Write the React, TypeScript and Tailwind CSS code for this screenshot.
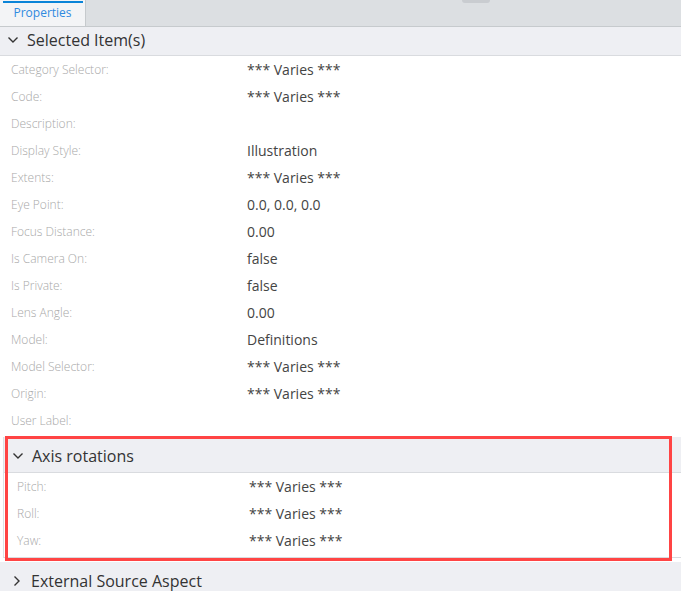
const font = { fontFamily: '"Open Sans", "Liberation Sans", sans-serif' };

const selected: [string, string][] = [
  ["Category Selector:", "*** Varies ***"],
  ["Code:", "*** Varies ***"],
  ["Description:", ""],
  ["Display Style:", "Illustration"],
  ["Extents:", "*** Varies ***"],
  ["Eye Point:", "0.0, 0.0, 0.0"],
  ["Focus Distance:", "0.00"],
  ["Is Camera On:", "false"],
  ["Is Private:", "false"],
  ["Lens Angle:", "0.00"],
  ["Model:", "Definitions"],
  ["Model Selector:", "*** Varies ***"],
  ["Origin:", "*** Varies ***"],
  ["User Label:", ""],
];

const rotations: [string, string][] = [
  ["Pitch:", "*** Varies ***"],
  ["Roll:", "*** Varies ***"],
  ["Yaw:", "*** Varies ***"],
];

function Chevron({ open }: { open: boolean }) {
  return (
    <svg width="12" height="12" viewBox="0 0 12 12" className="shrink-0">
      {open ? (
        <polyline points="1.5,3.5 6,8 10.5,3.5" fill="none" stroke="#333" strokeWidth="1.4" />
      ) : (
        <polyline points="3.5,1.5 8,6 3.5,10.5" fill="none" stroke="#333" strokeWidth="1.4" />
      )}
    </svg>
  );
}

function Row({ label, value, labelW }: { label: string; value: string; labelW: string }) {
  return (
    <div className="flex h-[27px] items-center">
      <div className={`${labelW} shrink-0 text-[12px] font-light text-[#a8a8a8]`}>{label}</div>
      <div className="text-[14px] text-[#444]">{value}</div>
    </div>
  );
}

export default function App() {
  return (
    <div className="w-[681px] h-[591px] overflow-hidden bg-white" style={font}>
      {/* Tab bar */}
      <div className="relative flex h-[27px] bg-[#dcdfe2] border-b border-[#c6cacd]">
        <div className="flex w-[86px] flex-col items-center bg-[#f3f4f6] border-r border-[#c6cacd]">
          <div className="mt-px h-[2px] w-[80px] bg-[#0a84d8]" />
          <div className="mt-[1px] text-[12px] text-[#2f8ae0]">Properties</div>
        </div>
        <div className="absolute left-[462px] top-0 h-[3px] w-[28px] rounded-b-[3px] bg-[#c9ccd0]" />
      </div>

      {/* Selected Item(s) */}
      <div className="flex h-[29px] items-center gap-[8px] bg-[#eeeff3] border-b border-[#d9dbdf] pl-[7px] pb-[2px]">
        <Chevron open />
        <span className="text-[16px] text-[#333]">Selected Item(s)</span>
      </div>
      <div className="pl-[11px]">
        {selected.map(([l, v]) => (
          <Row key={l} label={l} value={v} labelW="w-[236px]" />
        ))}
      </div>

      {/* Axis rotations */}
      <div className="relative mt-[3px] ml-[3px] border-l border-[#dfe1e4]">
        <div className="flex h-[36px] items-center gap-[8px] bg-[#eeeff3] border-b border-[#d9dbdf] pl-[8px] pt-[2px]">
          <Chevron open />
          <span className="text-[16px] text-[#333]">Axis rotations</span>
        </div>
        <div className="pl-[13px] pb-[3px] border-b border-[#d9dbdf]">
          {rotations.map(([l, v]) => (
            <Row key={l} label={l} value={v} labelW="w-[232px]" />
          ))}
        </div>
        <div className="pointer-events-none absolute left-[1px] top-[-1px] h-[125px] w-[667px] border-[3px] border-[#ff4444]" />
      </div>

      {/* External Source Aspect */}
      <div className="mt-[4px] flex h-[36px] items-center gap-[8px] bg-[#eeeff3] pl-[11px] pt-[2px]">
        <Chevron open={false} />
        <span className="text-[16px] text-[#333]">External Source Aspect</span>
      </div>
    </div>
  );
}
